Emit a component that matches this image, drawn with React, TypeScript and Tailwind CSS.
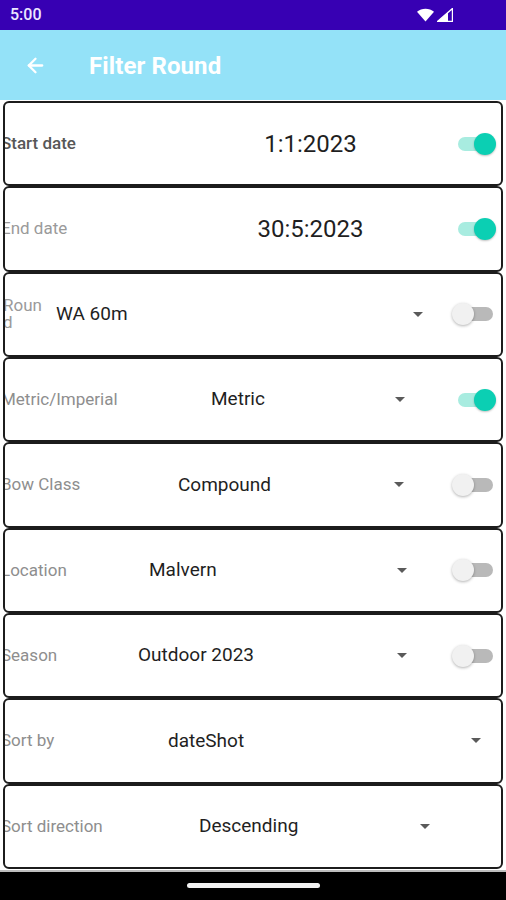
import React from "react";
import { ArrowLeft } from "lucide-react";

function Switch({ on }: { on: boolean }) {
  return (
    <div className="relative w-[35px] h-[14px] mr-[8px] shrink-0">
      <div className={"absolute inset-0 rounded-full " + (on ? "bg-[#a8ece0]" : "bg-[#b9b9b9]")} />
      {on ? (
        <div className="absolute left-[16px] top-[-4px] w-[22px] h-[22px] rounded-full bg-[#0bcfb3] shadow-[0_1px_2px_rgba(0,0,0,0.25)]" />
      ) : (
        <div className="absolute left-[-6px] top-[-4px] w-[22px] h-[22px] rounded-full bg-[#f1f1f1] shadow-[0_1px_3px_rgba(0,0,0,0.3)]" />
      )}
    </div>
  );
}

function Arrow() {
  return (
    <svg width="10" height="5" viewBox="0 0 10 5" className="shrink-0">
      <path d="M0 0 L10 0 L5 5 Z" fill="#5a5a5a" />
    </svg>
  );
}

function Card({ children }: { children: React.ReactNode }) {
  return (
    <div className="flex-1 border-2 border-[#1c1c1c] rounded-[6px] overflow-hidden flex items-center bg-white">
      {children}
    </div>
  );
}

type Spin = {
  label: string;
  labelW: number;
  value: string;
  valueW: number;
  sw?: boolean;
};

const spins: Spin[] = [
  { label: "Metric/Imperial", labelW: 210, value: "Metric", valueW: 184, sw: true },
  { label: "Bow Class", labelW: 177, value: "Compound", valueW: 216, sw: false },
  { label: "Location", labelW: 148, value: "Malvern", valueW: 248, sw: false },
  { label: "Season", labelW: 137, value: "Outdoor 2023", valueW: 259, sw: false },
  { label: "Sort by", labelW: 167, value: "dateShot", valueW: 303 },
  { label: "Sort direction", labelW: 198, value: "Descending", valueW: 221 },
];

export default function App() {
  return (
    <div className="w-[506px] h-[900px] flex flex-col bg-white font-['Roboto',sans-serif] overflow-hidden">
      {/* status bar */}
      <div className="h-[30px] shrink-0 bg-[#3700b3] flex items-center px-[10px]">
        <span className="text-[16px] text-[#ece6ff] font-medium">5:00</span>
        <div className="flex-1" />
        <svg width="17" height="14" viewBox="0 0 17 14" className="mr-[3px]">
          <path d="M8.5 13.5 L0 3.8 A13 13 0 0 1 17 3.8 Z" fill="#ffffff" />
        </svg>
        <svg width="16" height="14" viewBox="0 0 16 14" className="mr-[43px]">
          <path d="M15.5 0.5 L15.5 13.5 L0.5 13.5 Z" fill="none" stroke="#ffffff" strokeWidth="1.4" strokeLinejoin="round" />
          <path d="M0.5 13.5 L11 13.5 L11 4.6 Z" fill="#ffffff" />
        </svg>
      </div>
      {/* app bar */}
      <div className="h-[70px] shrink-0 bg-[#94e2f8] flex items-center">
        <ArrowLeft className="ml-[24px] text-white" size={23} strokeWidth={2.4} />
        <span className="ml-[42px] text-white text-[24px] font-bold tracking-[0.1px] mt-[2px]">Filter Round</span>
      </div>
      {/* cards */}
      <div className="h-[770px] shrink-0 flex flex-col px-[3px] py-[1px]">
        <Card>
          <div className="w-[162px] -ml-[4px] shrink-0 text-[17px] text-[#575757] font-medium whitespace-nowrap">Start date</div>
          <div className="flex-1 text-center text-[24px] text-[#1f1f1f]">1:1:2023</div>
          <Switch on={true} />
        </Card>
        <Card>
          <div className="w-[162px] -ml-[4px] shrink-0 text-[17px] text-[#9a9a9a] whitespace-nowrap">End date</div>
          <div className="flex-1 text-center text-[24px] text-[#1f1f1f]">30:5:2023</div>
          <Switch on={true} />
        </Card>
        <Card>
          <div className="w-[44px] -ml-[4px] shrink-0 text-[17px] leading-[17px] text-[#9a9a9a] break-all pl-[2px]">Round</div>
          <div className="ml-[11px] w-[357px] shrink-0 text-[19px] text-[#1f1f1f] whitespace-nowrap">WA 60m</div>
          <Arrow />
          <div className="flex-1" />
          <Switch on={false} />
        </Card>
        {spins.map((s) => (
          <Card key={s.label}>
            <div
              className="-ml-[4px] shrink-0 text-[17px] text-[#8e8e8e] whitespace-nowrap overflow-hidden"
              style={{ width: s.labelW }}
            >
              {s.label}
            </div>
            <div className="shrink-0 text-[19px] text-[#1f1f1f] whitespace-nowrap" style={{ width: s.valueW }}>
              {s.value}
            </div>
            <Arrow />
            <div className="flex-1" />
            {s.sw !== undefined && <Switch on={s.sw} />}
          </Card>
        ))}
      </div>
      <div className="h-[2px] shrink-0 bg-[#bdbdbd]" />
      <div className="flex-1 bg-black flex justify-center pt-[11px]">
        <div className="w-[133px] h-[5px] rounded-full bg-[#f2f2f2]" />
      </div>
    </div>
  );
}
